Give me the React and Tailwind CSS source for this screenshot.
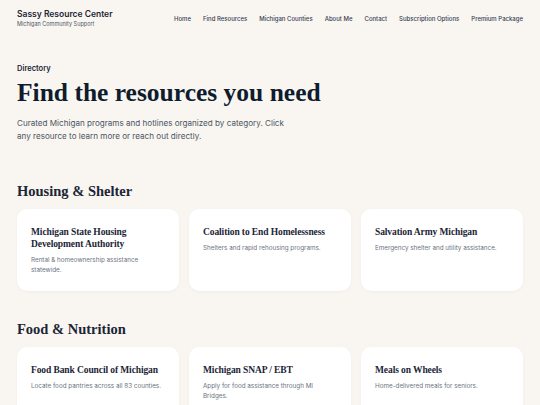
import React from "react";

const serif = { fontFamily: '"Liberation Serif", "DejaVu Serif", serif' };

const navLinks = [
  "Home",
  "Find Resources",
  "Michigan Counties",
  "About Me",
  "Contact",
  "Subscription Options",
  "Premium Package",
];

const sections = [
  {
    title: "Housing & Shelter",
    items: [
      {
        name: "Michigan State Housing Development Authority",
        desc: "Rental & homeownership assistance statewide.",
      },
      {
        name: "Coalition to End Homelessness",
        desc: "Shelters and rapid rehousing programs.",
      },
      {
        name: "Salvation Army Michigan",
        desc: "Emergency shelter and utility assistance.",
      },
    ],
  },
  {
    title: "Food & Nutrition",
    items: [
      {
        name: "Food Bank Council of Michigan",
        desc: "Locate food pantries across all 83 counties.",
      },
      {
        name: "Michigan SNAP / EBT",
        desc: "Apply for food assistance through MI Bridges.",
      },
      {
        name: "Meals on Wheels",
        desc: "Home-delivered meals for seniors.",
      },
    ],
  },
];

const ResourceCard = ({ item }) => (
  <div className="min-h-[82px] rounded-[10px] bg-white px-[14px] pt-[17px] pb-[14px] shadow-[0_1px_3px_rgba(0,0,0,0.04)]">
    <h3
      className="text-[9.5px] leading-[12px] font-bold tracking-[-0.1px] text-[#1b2536]"
      style={serif}
    >
      {item.name}
    </h3>
    <p className="mt-[5px] text-[6.3px] leading-[10px] text-[#6b7280]">
      {item.desc}
    </p>
  </div>
);

export default function App() {
  return (
    <div
      className="min-h-[405px] bg-[#f9f6f1] text-[#1b2536]"
      style={{ fontFamily: 'Inter, "Noto Sans", sans-serif' }}
    >
      <header className="flex items-center justify-between px-[17px] pt-[9px] pb-[8px]">
        <div>
          <div className="text-[8.5px] leading-[11px] font-semibold text-[#1b2536]">
            Sassy Resource Center
          </div>
          <div className="text-[5.5px] leading-[8px] text-[#4b5563]">
            Michigan Community Support
          </div>
        </div>
        <nav className="flex items-center gap-[12px]">
          {navLinks.map((link) => (
            <a key={link} className="text-[6px] font-medium text-[#374151]">
              {link}
            </a>
          ))}
        </nav>
      </header>

      <main className="px-[17px] pt-[28px]">
        <div className="text-[7.5px] leading-[10px] font-semibold text-[#1b2536]">
          Directory
        </div>
        <h1
          className="mt-[3px] text-[25.5px] leading-[32px] font-bold text-[#0f1c2e]"
          style={serif}
        >
          Find the resources you need
        </h1>
        <p className="mt-[8px] max-w-[272px] text-[8.1px] leading-[13px] text-[#4b5563]">
          Curated Michigan programs and hotlines organized by category. Click
          any resource to learn more or reach out directly.
        </p>

        {sections.map((section, i) => (
          <section key={section.title} className={i === 0 ? "mt-[38px]" : "mt-[28px]"}>
            <h2
              className="text-[14.5px] leading-[20px] font-bold text-[#1b2536]"
              style={serif}
            >
              {section.title}
            </h2>
            <div className="mt-[8px] grid grid-cols-3 gap-[10px]">
              {section.items.map((item) => (
                <ResourceCard key={item.name} item={item} />
              ))}
            </div>
          </section>
        ))}
      </main>
    </div>
  );
}
